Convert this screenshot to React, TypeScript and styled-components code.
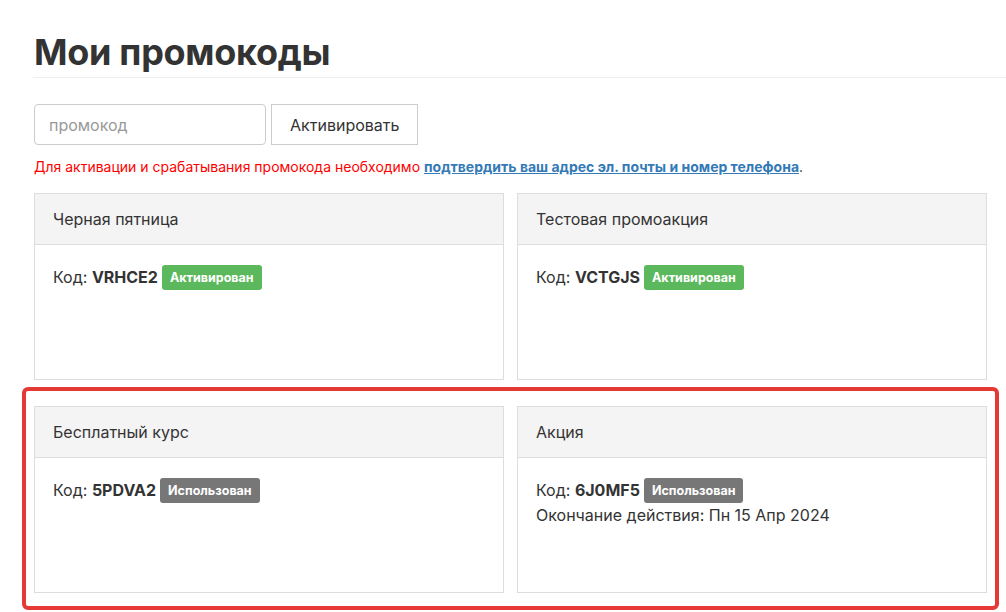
import React from "react";
import styled, { createGlobalStyle } from "styled-components";

const G = createGlobalStyle`
  body { margin: 0; background: #fff; font-family: Inter, "Noto Sans", sans-serif; color: #333; }
`;
const Page = styled.div` padding: 27px 0 0 34px; `;
const Title = styled.h1`
  margin: 0; font-size: 36px; font-weight: 700; color: #333; line-height: 50px; letter-spacing: -0.3px;
`;
const Divider = styled.div` height: 1px; background: #eee; margin: 0 0 26px -1px; `;
const Form = styled.div` display: flex; gap: 5px; `;
const Input = styled.input`
  width: 232px; height: 41px; box-sizing: border-box; border: 1px solid #ccc; border-radius: 4px;
  padding: 0 14px; font: 16px Inter, sans-serif; color: #333;
  &::placeholder { color: #999; }
`;
const Button = styled.button`
  height: 41px; padding: 0 18px; background: #fff; border: 1px solid #ccc; border-radius: 0;
  font: 16px Inter, sans-serif; color: #333;
`;
const Note = styled.p`
  margin: 13px 0 18px; font-size: 14px; color: #f00; line-height: 17px;
  a { color: #337ab7; font-weight: 700; text-decoration: underline; }
  span { color: #333; }
`;
const Row = styled.div` display: grid; grid-template-columns: 470px 470px; gap: 13px; `;
const Highlight = styled.div`
  margin: 7px 0 0 -12px; width: 977px; box-sizing: border-box; border: 4px solid #e53935; border-radius: 6px;
  padding: 15px 8px 13px 8px;
`;
const Card = styled.div` border: 1px solid #ddd; height: 187px; box-sizing: border-box; `;
const Head = styled.div`
  background: #f4f4f4; border-bottom: 1px solid #ddd; height: 51px; box-sizing: border-box;
  padding: 0 18px; display: flex; align-items: center; font-size: 16px; color: #333;
`;
const Body = styled.div` padding: 20px 18px; font-size: 16px; line-height: 25px; color: #333; `;
const Code = styled.b` font-weight: 700; `;
const Badge = styled.span<{ $used?: boolean }>`
  display: inline-block; margin-left: 4px; padding: 3px 8px; border-radius: 3px;
  background: ${p => (p.$used ? "#777" : "#5cb85c")}; color: #fff; font-size: 12.5px; font-weight: 700;
  line-height: 19px; vertical-align: 1px;
`;

type P = { title: string; code: string; used?: boolean; extra?: string };
const PromoCard = ({ title, code, used, extra }: P) => (
  <Card>
    <Head>{title}</Head>
    <Body>
      Код: <Code>{code}</Code>
      <Badge $used={used}>{used ? "Использован" : "Активирован"}</Badge>
      {extra && <div>{extra}</div>}
    </Body>
  </Card>
);

export default function App() {
  return (
    <Page>
      <G />
      <Title>Мои промокоды</Title>
      <Divider />
      <Form>
        <Input placeholder="промокод" />
        <Button>Активировать</Button>
      </Form>
      <Note>
        Для активации и срабатывания промокода необходимо <a href="#">подтвердить ваш адрес эл. почты и номер телефона</a><span>.</span>
      </Note>
      <Row>
        <PromoCard title="Черная пятница" code="VRHCE2" />
        <PromoCard title="Тестовая промоакция" code="VCTGJS" />
      </Row>
      <Highlight>
        <Row>
          <PromoCard title="Бесплатный курс" code="5PDVA2" used />
          <PromoCard title="Акция" code="6J0MF5" used extra="Окончание действия: Пн 15 Апр 2024" />
        </Row>
      </Highlight>
    </Page>
  );
}
